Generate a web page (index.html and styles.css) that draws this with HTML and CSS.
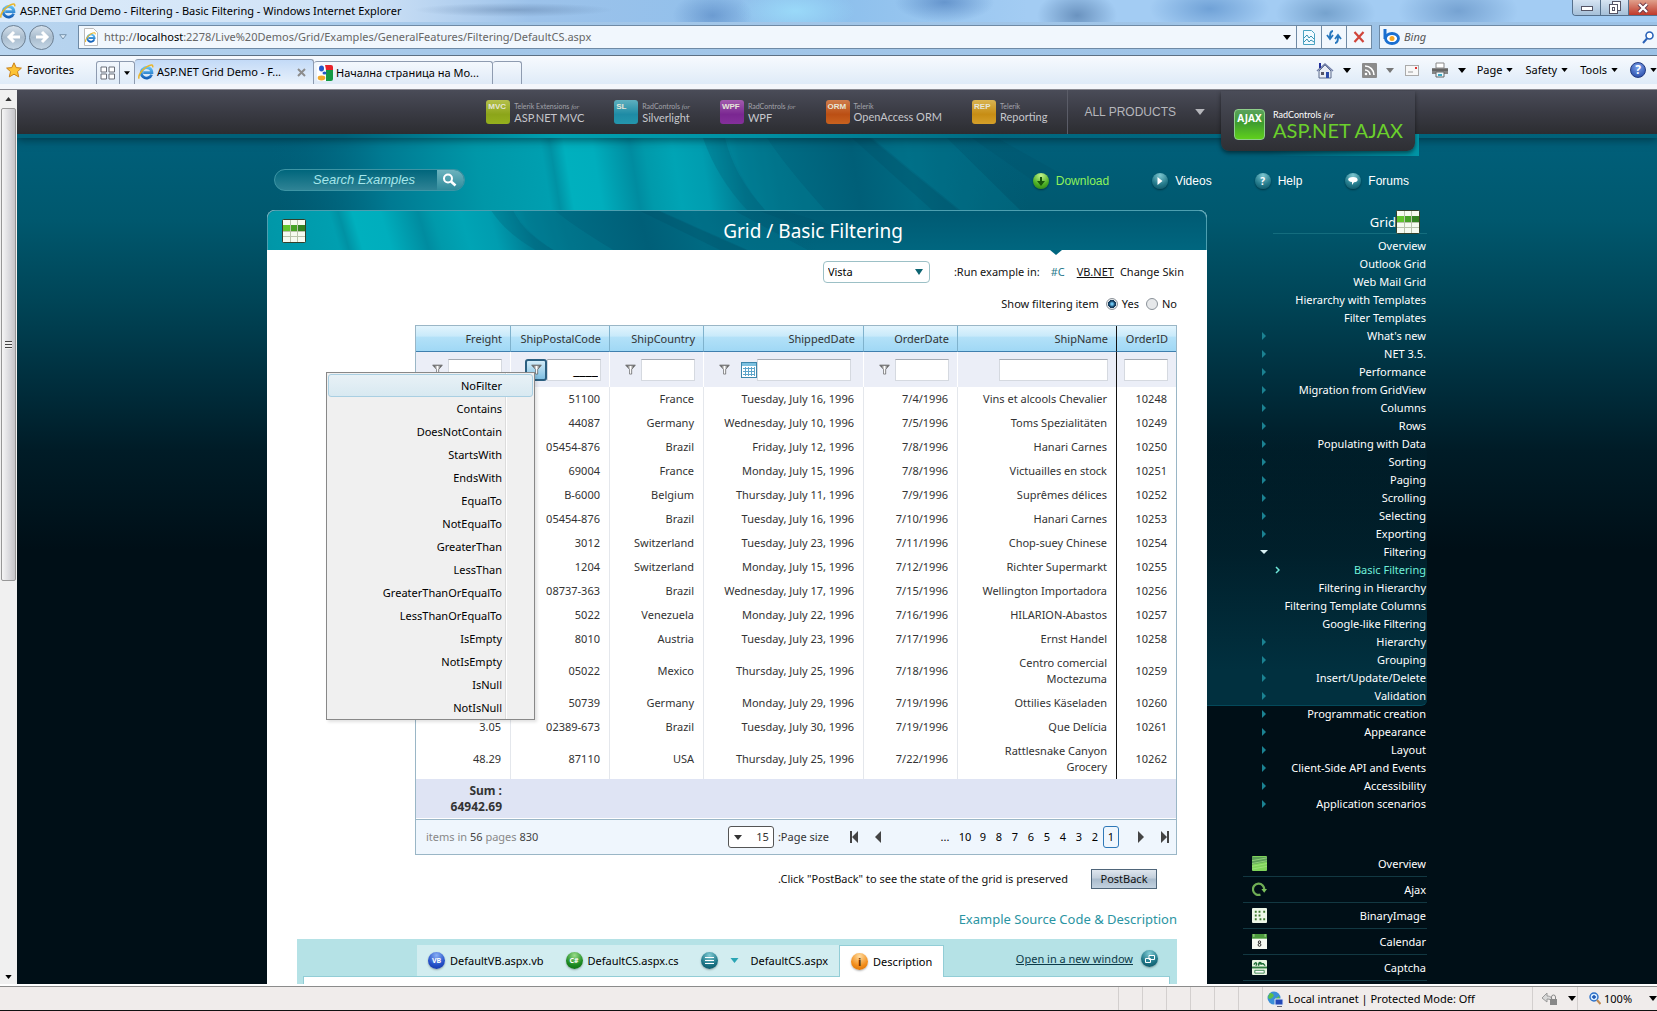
FILE: index.html
```html
<!DOCTYPE html>
<html lang="en">
<head>
	<title>ASP.NET Grid Demo - Filtering - Basic Filtering</title>
	<meta charset="utf-8">
	<link rel="stylesheet" href="styles.css">
</head>
<body>
<!-- shared icons -->
<svg class="defs" width="0" height="0" aria-hidden="true">
	<defs>
		<linearGradient id="blue" x1="0" y1="0" x2="0" y2="1"><stop offset="0" stop-color="#5fc0f5"/><stop offset="1" stop-color="#1560b8"/></linearGradient>
		<linearGradient id="metal" x1="0" y1="0" x2="1" y2="0"><stop offset="0" stop-color="#222"/><stop offset=".5" stop-color="#fff"/><stop offset="1" stop-color="#222"/></linearGradient>
		<linearGradient id="sea" gradientUnits="userSpaceOnUse" x1="0" y1="0" x2="940" y2="0" gradientTransform="skewX(9)">
			<stop offset="0" stop-color="#00607a" stop-opacity="0"/>
			<stop offset=".12" stop-color="#007a92"/>
			<stop offset=".22" stop-color="#0097a8"/>
			<stop offset=".29" stop-color="#009fb0"/>
			<stop offset=".3" stop-color="#0092a4"/>
			<stop offset=".315" stop-color="#00b0be"/>
			<stop offset=".345" stop-color="#00aebd"/>
			<stop offset=".385" stop-color="#008ca0"/>
			<stop offset=".4" stop-color="#009aab"/>
			<stop offset=".43" stop-color="#00a4b5"/>
			<stop offset=".46" stop-color="#009db0"/>
			<stop offset=".5" stop-color="#00788f"/>
			<stop offset=".54" stop-color="#006c84"/>
			<stop offset=".62" stop-color="#005f78"/>
			<stop offset=".68" stop-color="#006a82"/>
			<stop offset=".8" stop-color="#006078" stop-opacity="0"/>
		</linearGradient>
	</defs>
	<g id="waves">
		<path d="M0 0h940v72H0z" fill="url(#sea)"/>
		<path d="M436 0q14 40 44 72h18Q468 40 458 0z" fill="#005870" opacity=".25"/>
		<path d="M460 0q10 40 38 72h60Q520 30 500 0z" fill="#008ca0" opacity=".25"/>
		<path d="M585 0l80 72h26L603 0z" fill="#004f68" opacity=".3"/>
		<path d="M605 0l88 72h60L680 0z" fill="#00829a" opacity=".25"/>
		<path d="M705 0l60 42h40L730 0z" fill="#004f68" opacity=".25"/>
	</g>
	<symbol id="ie" viewBox="0 0 16 16">
		<path d="M13.6 10.6A5.3 5.3 0 1 1 13.9 8.6H5.2" fill="none" stroke="url(#blue)" stroke-width="2.8"/>
		<path d="M1.2 14.6C-.6 12 4 5.600 9 2.600c4-2.300 6.500-2.200 5.600.8" fill="none" stroke="#e9b62c" stroke-width="1.500"/>
	</symbol>
	<symbol id="funnel" viewBox="0 0 12 12">
		<path d="M1 1.500h10L7.300 6v5H5V6z" fill="url(#metal)" stroke="#444" stroke-width=".6"/>
		<path d="M.5 1.300h11" stroke="#777"/>
	</symbol>
	<symbol id="gridicon" viewBox="0 0 24 24">
		<rect x=".5" y=".5" width="23" height="23" rx="1" fill="#b9c3ac" stroke="#33402a"/>
		<path d="M1 1h7v5H1zM9 1h6v5H9zM16 1h7v5h-7zM1 13h7v4H1zM9 13h6v4H9zM16 13h7v4h-7zM1 18h7v5H1zM9 18h6v5H9zM16 18h7v5h-7z" fill="#f6faf0"/>
		<path d="M1 6h7v6H1z" fill="#62c52c"/><path d="M9 6h6v6H9z" fill="#45a125"/><path d="M16 6h7v6h-7z" fill="#358323"/>
	</symbol>
	<symbol id="down" viewBox="0 0 8 5"><path d="M0 0h8L4 5z" fill="currentColor"/></symbol>
</svg>

<div class="titlebar">
	<svg class="i16"><use href="#ie"/></svg>
	<span class="title">ASP.NET Grid Demo - Filtering - Basic Filtering - Windows Internet Explorer</span>
	<div class="win">
		<button aria-label="Minimize"><svg width="14" height="14" viewBox="0 0 14 14"><rect x="1.500" y="5.500" width="11" height="4" fill="#fff" stroke="#556"/></svg></button>
		<button aria-label="Restore"><svg width="14" height="14" viewBox="0 0 14 14"><rect x="4.500" y=".5" width="8" height="9" fill="#fff" stroke="#556"/><rect x="1.500" y="3.500" width="8" height="9" fill="#fff" stroke="#556"/><rect x="4.500" y="6.500" width="2" height="3" fill="none" stroke="#556"/></svg></button>
		<button class="close" aria-label="Close"><svg width="14" height="14" viewBox="0 0 14 14"><path d="M3 3l8 8M11 3l-8 8" stroke="#634" stroke-width="4"/><path d="M3 3l8 8M11 3l-8 8" stroke="#fff" stroke-width="2.400"/></svg></button>
	</div>
</div>

<div class="addressbar">
	<button class="travel" aria-label="Back"><svg width="16" height="16" viewBox="0 0 16 16"><path d="M14 8H4M8 3L3 8l5 5" fill="none" stroke="#fff" stroke-width="3"/></svg></button>
	<button class="travel" aria-label="Forward"><svg width="16" height="16" viewBox="0 0 16 16"><path d="M2 8h10M8 3l5 5-5 5" fill="none" stroke="#fff" stroke-width="3"/></svg></button>
	<svg class="recent" width="8" height="6" viewBox="0 0 8 6"><path d="M.7.7h6.600L4 5z" fill="#dcebf8" stroke="#7793ac"/></svg>
	<div class="url">
		<svg class="page-ico" width="16" height="18" viewBox="0 0 16 18"><path d="M1.500.5h9l4 4v13h-13z" fill="#fff" stroke="#bbb"/><svg x="2" y="4" width="11" height="11"><use href="#ie"/></svg></svg>
		<span class="addr">http://<b>localhost</b>:2278/Live%20Demos/Grid/Examples/GeneralFeatures/Filtering/DefaultCS.aspx</span>
		<svg class="arrow" width="8" height="5"><use href="#down"/></svg>
		<button aria-label="Compatibility view"><svg width="12" height="15" viewBox="0 0 12 15"><path d="M.5.5h8l3 3v11H.5z" fill="#f2fbff" stroke="#4aa3c2"/><path d="M1 8l3-3 2 3 2-2 3 3M1 12l3-3 2 3 2-2 3 2" fill="none" stroke="#3a92b4"/></svg></button>
		<button aria-label="Refresh"><svg width="16" height="14" viewBox="0 0 16 14"><path d="M7 1C4 1 4 4 4 8M1 5l3 4 3-4M9 13c3 0 3-3 3-7M9 9l3-4 3 4" fill="none" stroke="#2676bd" stroke-width="1.800"/></svg></button>
		<button aria-label="Stop"><svg width="12" height="12" viewBox="0 0 12 12"><path d="M1.500 1l9 10M10.500 1l-9 10" stroke="#d0453b" stroke-width="2.200"/></svg></button>
	</div>
	<div class="bing">
		<svg width="17" height="16" viewBox="0 0 17 16"><path d="M2 0v10" stroke="#1a6fd0" stroke-width="3"/><ellipse cx="9" cy="9.500" rx="6.500" ry="5" fill="#fff" stroke="#1a6fd0" stroke-width="2.800"/><circle cx="9" cy="9.500" r="2.500" fill="#f5a623"/></svg>
		<input type="text" placeholder="Bing" aria-label="Search Bing">
		<svg width="12" height="13" viewBox="0 0 12 13"><circle cx="7.500" cy="4.500" r="3.500" fill="#fff" stroke="#2a62b8" stroke-width="1.600"/><path d="M5 7.500L1 12" stroke="#2a62b8" stroke-width="2"/></svg>
	</div>
</div>

<div class="commandbar">
	<div class="fav">
		<svg width="16" height="16" viewBox="0 0 16 16"><path d="M8 .8l2.200 4.800 5.200.5-3.900 3.500 1.200 5.300L8 12.200l-4.700 2.700 1.200-5.300L.6 6.100l5.200-.5z" fill="#fdc436" stroke="#c9801a"/></svg>
		Favorites
	</div>
	<div class="tabs">
		<div class="quick">
			<button aria-label="Quick tabs"><svg width="16" height="14" viewBox="0 0 16 14"><path d="M1 1h5.500v5H1zM9 1h5.500v5H9zM1 8h5.500v5H1zM9 8h5.500v5H9z" fill="#fff" stroke="#6b6f78"/></svg></button>
			<button aria-label="Tab list"><svg width="6" height="4"><use href="#down"/></svg></button>
		</div>
		<div class="tab active"><svg class="i16"><use href="#ie"/></svg><span>ASP.NET Grid Demo - F...</span><svg class="x" width="9" height="9" viewBox="0 0 9 9"><path d="M1 1l7 7M8 1L1 8" stroke="#8c8c8c" stroke-width="2"/></svg></div>
		<div class="tab">
			<svg class="i16" viewBox="0 0 16 16"><path d="M8 0h6a2 2 0 0 1 2 2v3H9z" fill="#e8232a"/><path d="M9 5h7v9a2 2 0 0 1-2 2H9z" fill="#149a44"/><path d="M0 2a2 2 0 0 1 2-2h6l1 16H2a2 2 0 0 1-2-2z" fill="#fff"/><ellipse cx="4.500" cy="3.500" rx="2.500" ry="3" fill="#2458c8"/><ellipse cx="7.500" cy="8" rx="2" ry="1.500" fill="#2458c8"/><ellipse cx="4.500" cy="13" rx="3.800" ry="2.400" fill="#f0a92e"/></svg>
			<span>Начална страница на Mo...</span>
		</div>
		<div class="tab new"></div>
	</div>
	<div class="commands">
		<svg width="18" height="17" viewBox="0 0 18 17"><path d="M3 9v7h12V9L9 3z" fill="#e8ecf4" stroke="#5a6a8c"/><path d="M1 9l8-7 8 7" fill="none" stroke="#7380a8" stroke-width="1.600"/><path d="M4 1v5" stroke="#22309b" stroke-width="2"/><path d="M5 10h3v3H5z" fill="#556"/><path d="M10 10h3v6h-3z" fill="#2a4aa8"/></svg>
		<svg class="arrow" width="8" height="5"><use href="#down"/></svg>
		<svg width="15" height="15" viewBox="0 0 15 15"><rect width="15" height="15" rx="1" fill="#8b8b8b"/><path d="M3 7a5 5 0 0 1 5 5M3 3a9 9 0 0 1 9 9" fill="none" stroke="#fff" stroke-width="1.600"/><circle cx="4" cy="11" r="1.300" fill="#fff"/></svg>
		<svg class="arrow dim" width="8" height="5"><use href="#down"/></svg>
		<svg width="14" height="11" viewBox="0 0 14 11"><rect x=".5" y=".5" width="13" height="10" fill="#f7f7f7" stroke="#aaa"/><path d="M10 2h2v2h-2z" fill="#d33"/><path d="M3 7h5" stroke="#999"/></svg>
		<svg width="18" height="16" viewBox="0 0 18 16"><path d="M5 1h8v5H5z" fill="#fff" stroke="#888"/><path d="M1 6h16v6H1z" fill="#858585"/><path d="M1 8h16" stroke="#444"/><path d="M5 10h8v5H5z" fill="#eef8fc" stroke="#666"/><path d="M7 12h4v2H7z" fill="#3aa8c4"/></svg>
		<svg class="arrow" width="8" height="5"><use href="#down"/></svg>
		<button>Page <svg width="7" height="4"><use href="#down"/></svg></button>
		<button>Safety <svg width="7" height="4"><use href="#down"/></svg></button>
		<button>Tools <svg width="7" height="4"><use href="#down"/></svg></button>
		<button class="help" aria-label="Help"><i>?</i><svg width="7" height="4"><use href="#down"/></svg></button>
	</div>
</div>

<div class="viewport">
	<div class="scrollbar">
		<svg width="7" height="4" viewBox="0 0 8 5"><path d="M0 5h8L4 0z" fill="#333"/></svg>
		<div class="track"><div class="thumb"><i></i></div></div>
		<svg width="7" height="4"><use href="#down"/></svg>
	</div>

	<div class="page">
		<div class="topbar">
			<div class="wrap products">
				<a href="#" class="prod"><i class="mvc">MVC</i><span><small>Telerik Extensions <em>for</em></small>ASP.NET MVC</span></a>
				<a href="#" class="prod"><i class="sl">SL</i><span><small>RadControls <em>for</em></small>Silverlight</span></a>
				<a href="#" class="prod"><i class="wpf">WPF</i><span><small>RadControls <em>for</em></small>WPF</span></a>
				<a href="#" class="prod"><i class="orm">ORM</i><span><small>Telerik</small>OpenAccess ORM</span></a>
				<a href="#" class="prod"><i class="rep">REP</i><span><small>Telerik</small>Reporting</span></a>
				<a href="#" class="all">ALL PRODUCTS <svg width="10" height="6"><use href="#down"/></svg></a>
				<div class="ajax-glow"></div>
				<a href="#" class="ajax"><i>AJAX</i><span><small>RadControls <em>for</em></small>ASP.NET AJAX</span></a>
			</div>
		</div>

		<div class="wrap tools">
			<svg class="sea" viewBox="0 0 940 72" preserveAspectRatio="none"><use href="#waves"/></svg>
			<form class="search">
				<input type="text" placeholder="Search Examples" aria-label="Search Examples">
				<button type="button" aria-label="Search"><svg width="15" height="14" viewBox="0 0 15 14"><circle cx="6" cy="5.500" r="4" fill="none" stroke="#fff" stroke-width="2"/><path d="M9 8.500l4.500 4" stroke="#fff" stroke-width="2.600"/></svg></button>
			</form>
			<div class="links">
				<a href="#" class="dl"><i class="orb green"><svg width="8" height="9" viewBox="0 0 8 9"><path d="M3 0h2v4h3L4 9 0 4h3z" fill="#17560c"/></svg></i>Download</a>
				<a href="#"><i class="orb"><svg width="6" height="8" viewBox="0 0 5 8"><path d="M0 0l5 4-5 4z" fill="#fff"/></svg></i>Videos</a>
				<a href="#"><i class="orb">?</i>Help</a>
				<a href="#"><i class="orb"><svg width="10" height="8" viewBox="0 0 10 8"><path d="M5 0c6 0 6 5 1 5.200L4 8V5C-1.500 4.500-1 0 5 0z" fill="#fff"/></svg></i>Forums</a>
			</div>
		</div>

		<div class="wrap columns">
			<div class="card">
				<div class="card-head">
					<svg class="sea" viewBox="212 0 940 72" preserveAspectRatio="none"><use href="#waves"/></svg>
					<svg class="i24"><use href="#gridicon"/></svg>
					<h1>Grid / Basic Filtering</h1>
				</div>

				<div class="config">
					<select aria-label="Skin"><option>Vista</option></select>
					<span class="run">:Run example in:</span>
					<a href="#" class="cs">#C</a>
					<a href="#" class="vb">VB.NET</a>
					<span class="skin">Change Skin</span>
				</div>
				<div class="toggle">
					<span>Show filtering item</span>
					<label><input type="radio" name="show" checked>Yes</label>
					<label><input type="radio" name="show">No</label>
				</div>

				<div class="grid">
					<table>
						<colgroup><col class="w95"><col class="w99"><col class="w94"><col class="w160"><col class="w94"><col class="w159"><col class="w59"></colgroup>
						<thead>
							<tr><th>Freight</th><th>ShipPostalCode</th><th>ShipCountry</th><th>ShippedDate</th><th>OrderDate</th><th>ShipName</th><th>OrderID</th></tr>
							<tr class="filter">
								<td><div><button aria-label="Filter Freight"><svg><use href="#funnel"/></svg></button><input type="text" aria-label="Freight"></div></td>
								<td><div><button class="on" aria-label="Filter ShipPostalCode"><svg><use href="#funnel"/></svg></button><input type="text" aria-label="ShipPostalCode" value="____"></div></td>
								<td><div><button aria-label="Filter ShipCountry"><svg><use href="#funnel"/></svg></button><input type="text" aria-label="ShipCountry"></div></td>
								<td><div class="date"><button aria-label="Filter ShippedDate"><svg><use href="#funnel"/></svg></button><button class="cal" aria-label="Open calendar"><svg viewBox="0 0 16 16"><rect x=".5" y=".5" width="15" height="15" fill="#fff" stroke="#3d86ab"/><path d="M1 1h14v3H1z" fill="#7cc0e0"/><path d="M2 6.500h12M2 9.500h12M2 12.500h12M4.500 5v9M7.500 5v9M10.500 5v9M13.500 5v9" stroke="#5ea5cb"/></svg></button><input type="text" aria-label="ShippedDate"></div></td>
								<td><div><button aria-label="Filter OrderDate"><svg><use href="#funnel"/></svg></button><input type="text" aria-label="OrderDate"></div></td>
								<td><div class="name"><input type="text" aria-label="ShipName"></div></td>
								<td><div class="id"><input type="text" aria-label="OrderID"></div></td>
							</tr>
						</thead>
						<tbody>
							<tr><td></td><td>51100</td><td>France</td><td>Tuesday, July 16, 1996</td><td>7/4/1996</td><td>Vins et alcools Chevalier</td><td>10248</td></tr>
							<tr><td></td><td>44087</td><td>Germany</td><td>Wednesday, July 10, 1996</td><td>7/5/1996</td><td>Toms Spezialitäten</td><td>10249</td></tr>
							<tr><td></td><td>05454-876</td><td>Brazil</td><td>Friday, July 12, 1996</td><td>7/8/1996</td><td>Hanari Carnes</td><td>10250</td></tr>
							<tr><td></td><td>69004</td><td>France</td><td>Monday, July 15, 1996</td><td>7/8/1996</td><td>Victuailles en stock</td><td>10251</td></tr>
							<tr><td></td><td>B-6000</td><td>Belgium</td><td>Thursday, July 11, 1996</td><td>7/9/1996</td><td>Suprêmes délices</td><td>10252</td></tr>
							<tr><td></td><td>05454-876</td><td>Brazil</td><td>Tuesday, July 16, 1996</td><td>7/10/1996</td><td>Hanari Carnes</td><td>10253</td></tr>
							<tr><td></td><td>3012</td><td>Switzerland</td><td>Tuesday, July 23, 1996</td><td>7/11/1996</td><td>Chop-suey Chinese</td><td>10254</td></tr>
							<tr><td></td><td>1204</td><td>Switzerland</td><td>Monday, July 15, 1996</td><td>7/12/1996</td><td>Richter Supermarkt</td><td>10255</td></tr>
							<tr><td></td><td>08737-363</td><td>Brazil</td><td>Wednesday, July 17, 1996</td><td>7/15/1996</td><td>Wellington Importadora</td><td>10256</td></tr>
							<tr><td></td><td>5022</td><td>Venezuela</td><td>Monday, July 22, 1996</td><td>7/16/1996</td><td>HILARION-Abastos</td><td>10257</td></tr>
							<tr><td></td><td>8010</td><td>Austria</td><td>Tuesday, July 23, 1996</td><td>7/17/1996</td><td>Ernst Handel</td><td>10258</td></tr>
							<tr><td></td><td>05022</td><td>Mexico</td><td>Thursday, July 25, 1996</td><td>7/18/1996</td><td>Centro comercial<br>Moctezuma</td><td>10259</td></tr>
							<tr><td></td><td>50739</td><td>Germany</td><td>Monday, July 29, 1996</td><td>7/19/1996</td><td>Ottilies Käseladen</td><td>10260</td></tr>
							<tr><td>3.05</td><td>02389-673</td><td>Brazil</td><td>Tuesday, July 30, 1996</td><td>7/19/1996</td><td>Que Delícia</td><td>10261</td></tr>
							<tr><td>48.29</td><td>87110</td><td>USA</td><td>Thursday, July 25, 1996</td><td>7/22/1996</td><td>Rattlesnake Canyon<br>Grocery</td><td>10262</td></tr>
						</tbody>
						<tfoot>
							<tr><td>Sum :<br>64942.69</td><td></td><td></td><td></td><td></td><td></td><td></td></tr>
						</tfoot>
					</table>
					<div class="pager">
						<span class="info">items in <b>56</b> pages <b>830</b></span>
						<div class="size">
							<button><svg width="8" height="5"><use href="#down"/></svg>15</button>
							<span>:Page size</span>
						</div>
						<button class="nav" aria-label="First page"><svg width="10" height="12" viewBox="0 0 10 12"><path d="M1 0h2v12H1zM9 0v12L3 6z" fill="#444"/></svg></button>
						<button class="nav" aria-label="Previous page"><svg width="6" height="12" viewBox="0 0 6 12"><path d="M6 0v12L0 6z" fill="#444"/></svg></button>
						<div class="pages">
							<a href="#">...</a><a href="#">10</a><a href="#">9</a><a href="#">8</a><a href="#">7</a><a href="#">6</a><a href="#">5</a><a href="#">4</a><a href="#">3</a><a href="#">2</a><a href="#" class="cur">1</a>
						</div>
						<button class="nav" aria-label="Next page"><svg width="6" height="12" viewBox="0 0 6 12"><path d="M0 0v12l6-6z" fill="#444"/></svg></button>
						<button class="nav" aria-label="Last page"><svg width="10" height="12" viewBox="0 0 10 12"><path d="M7 0h2v12H7zM1 0v12l6-6z" fill="#444"/></svg></button>
					</div>

					<ul class="menu">
						<li class="hover">NoFilter</li>
						<li>Contains</li>
						<li>DoesNotContain</li>
						<li>StartsWith</li>
						<li>EndsWith</li>
						<li>EqualTo</li>
						<li>NotEqualTo</li>
						<li>GreaterThan</li>
						<li>LessThan</li>
						<li>GreaterThanOrEqualTo</li>
						<li>LessThanOrEqualTo</li>
						<li>IsEmpty</li>
						<li>NotIsEmpty</li>
						<li>IsNull</li>
						<li>NotIsNull</li>
					</ul>
				</div>

				<div class="post">
					<span>.Click "PostBack" to see the state of the grid is preserved</span>
					<button>PostBack</button>
				</div>
				<h2>Example Source Code &amp; Description</h2>

				<div class="source">
					<div class="source-bar">
						<div class="files">
							<a href="#"><i class="ball vbi">VB</i>DefaultVB.aspx.vb</a>
							<a href="#"><i class="ball csi">C#</i>DefaultCS.aspx.cs</a>
							<a href="#" class="drop"><i class="ball lsi"><svg width="9" height="7" viewBox="0 0 9 7"><path d="M0 .5h9M0 3.500h9M0 6.500h9" stroke="#fff"/></svg></i><svg class="tri" width="9" height="5"><use href="#down"/></svg>DefaultCS.aspx</a>
							<a href="#" class="sel"><i class="ball ini">i</i>Description</a>
						</div>
						<a href="#" class="open"><u>Open in a new window</u><i class="ball lsi"><svg width="10" height="8" viewBox="0 0 10 8"><path d="M4 .5h5.500v4H4zM.5 3.500h5v4h-5z" fill="#2d8697" stroke="#fff"/></svg></i></a>
					</div>
					<div class="source-body"></div>
				</div>
			</div>

			<div class="side">
				<div class="side-head"><span>Grid</span><svg class="i24"><use href="#gridicon"/></svg></div>
				<ul class="tree">
					<li><a href="#">Overview</a></li>
					<li><a href="#">Outlook Grid</a></li>
					<li><a href="#">Web Mail Grid</a></li>
					<li><a href="#">Hierarchy with Templates</a></li>
					<li><a href="#">Filter Templates</a></li>
					<li class="sub"><a href="#">What's new</a></li>
					<li class="sub"><a href="#">NET 3.5.</a></li>
					<li class="sub"><a href="#">Performance</a></li>
					<li class="sub"><a href="#">Migration from GridView</a></li>
					<li class="sub"><a href="#">Columns</a></li>
					<li class="sub"><a href="#">Rows</a></li>
					<li class="sub"><a href="#">Populating with Data</a></li>
					<li class="sub"><a href="#">Sorting</a></li>
					<li class="sub"><a href="#">Paging</a></li>
					<li class="sub"><a href="#">Scrolling</a></li>
					<li class="sub"><a href="#">Selecting</a></li>
					<li class="sub"><a href="#">Exporting</a></li>
					<li class="sub opened"><a href="#">Filtering</a></li>
					<li class="here"><svg width="5" height="8" viewBox="0 0 5 8"><path d="M1 1l3 3-3 3" fill="none" stroke="#6fe6d8" stroke-width="1.500"/></svg><a href="#">Basic Filtering</a></li>
					<li><a href="#">Filtering in Hierarchy</a></li>
					<li><a href="#">Filtering Template Columns</a></li>
					<li><a href="#">Google-like Filtering</a></li>
					<li class="sub"><a href="#">Hierarchy</a></li>
					<li class="sub"><a href="#">Grouping</a></li>
					<li class="sub"><a href="#">Insert/Update/Delete</a></li>
					<li class="sub"><a href="#">Validation</a></li>
					<li class="sub"><a href="#">Programmatic creation</a></li>
					<li class="sub"><a href="#">Appearance</a></li>
					<li class="sub"><a href="#">Layout</a></li>
					<li class="sub"><a href="#">Client-Side API and Events</a></li>
					<li class="sub"><a href="#">Accessibility</a></li>
					<li class="sub"><a href="#">Application scenarios</a></li>
				</ul>
				<ul class="controls">
					<li><svg viewBox="0 0 16 16"><rect width="16" height="16" rx="1" fill="#7fd45a"/><path d="M0 1h16v5L0 9z" fill="#5c9f57"/><path d="M0 5l16-3M0 8l16-3M0 11l16-3M0 14l16-3" stroke="#a9e88a" stroke-width=".7"/></svg><a href="#">Overview</a></li>
					<li><svg viewBox="0 0 16 16"><path d="M9 13.500A6 6 0 1 1 13 8.500" fill="none" stroke="#6fae55" stroke-width="2.400"/><path d="M10 7.500h6l-3 4z" fill="#7cc25c"/></svg><a href="#">Ajax</a></li>
					<li><svg viewBox="0 0 16 16"><rect width="16" height="16" rx="1" fill="#eef7e8"/><path d="M3 3h2v2H3zM7 3h2v2H7zM12 3h2v2h-2zM3 7h2v2H3zM7 7h2v2H7zM3 11h2v2H3zM8 11h2v2H8zM12 11h2v2h-2z" fill="#3d7a2e"/></svg><a href="#">BinaryImage</a></li>
					<li><svg viewBox="0 0 16 16"><path d="M0 1h16v15H0z" fill="#f6faf3"/><path d="M0 0h16v5H0z" fill="#4c9a3c"/><path d="M2 0v3M14 0v3" stroke="#b8e0a8"/><circle cx="8" cy="8.600" r="1.300" fill="none" stroke="#222"/><circle cx="8" cy="11.600" r="1.500" fill="none" stroke="#222"/></svg><a href="#">Calendar</a></li>
					<li><svg viewBox="0 0 16 16"><rect width="16" height="16" rx="1" fill="#e9f5e2"/><path d="M2 5c2-4 4-1 2 1M7 6c0-5 3-4 3-1M8 4h4l2 2" fill="none" stroke="#1e6b35" stroke-width="1.500"/><path d="M0 7h16v2H0z" fill="#2e7a3d"/><path d="M3 11h10v3H3z" fill="#fff" stroke="#3c8550"/></svg><a href="#">Captcha</a></li>
				</ul>
			</div>
		</div>
	</div>
</div>

<div class="status">
	<i></i><i></i><i></i><i></i><i></i><i></i>
	<div class="zone"><svg width="17" height="16" viewBox="0 0 17 16"><circle cx="7" cy="7" r="6.500" fill="#3a8fd8"/><path d="M3 2c3 0 5 2 3 4S2 9 1 6zM8 8l4-3 1 4-3 3z" fill="#5cbf4a"/><path d="M8 8h8v6H8z" fill="#2348b8" stroke="#dfe6f5"/><path d="M10 15.500h5" stroke="#667"/></svg>Local intranet | Protected Mode: Off</div>
	<div class="lock"><svg width="17" height="14" viewBox="0 0 17 14"><path d="M6 1L1 6l5 4V7c3 0 4 1 5 2 0-3-1-5-5-5z" fill="#d8d8d8" stroke="#999"/><path d="M9 7h7v6H9z" fill="#888"/><path d="M10.500 7V5a2 2 0 0 1 4 0v2" fill="none" stroke="#888"/></svg><svg width="8" height="5"><use href="#down"/></svg></div>
	<div class="zoom"><svg width="12" height="13" viewBox="0 0 12 13"><circle cx="5" cy="5" r="4" fill="#d5ebff" stroke="#2a6fc8" stroke-width="1.400"/><path d="M3 5h4M5 3v4" stroke="#1550b0" stroke-width="1.400"/><path d="M8 8l3.500 4" stroke="#c08a50" stroke-width="2"/></svg><span>100%</span><svg width="8" height="5"><use href="#down"/></svg></div>
</div>
</body>
</html>
```
FILE: styles.css
```css
*{box-sizing:border-box;}
body,h1,h2,ul,li{margin:0;padding:0;}
ul{list-style:none;}
html,body{height:100%;}
body{
	display:flex;
	flex-direction:column;
	overflow:hidden;
	background:#f0eceb;
	color:#000;
	font:11px/16px "Noto Sans","Open Sans",sans-serif;
}
button{
	padding:0;
	border:0;
	background:none;
	color:inherit;
	font:inherit;
}
input{font:inherit;min-width:0;}
a{color:inherit;text-decoration:none;}
svg{flex:none;display:block;}
.defs{position:absolute;}
.i16{width:16px;height:16px;}
.i24{width:24px;height:24px;}

/* window frame */
.titlebar,.addressbar{
	display:flex;
	align-items:center;
	flex:none;
}
.titlebar{
	height:22px;
	gap:4px;
	background:
		radial-gradient(ellipse 100px 7px at 31% 45%,rgba(70,100,140,.35),transparent),
		radial-gradient(ellipse 40px 24px at 43% 70%,rgba(50,100,170,.4),transparent),
		radial-gradient(ellipse 60px 24px at 48% 50%,rgba(155,220,250,.9),transparent),
		radial-gradient(ellipse 50px 20px at 57% 10%,rgba(50,100,170,.5),transparent),
		radial-gradient(ellipse 40px 26px at 65% 70%,rgba(50,90,140,.5),transparent),
		radial-gradient(ellipse 60px 26px at 73% 40%,rgba(50,110,180,.45),transparent),
		radial-gradient(ellipse 50px 26px at 80% 60%,rgba(50,100,150,.4),transparent),
		radial-gradient(ellipse 60px 30px at 88% 50%,rgba(50,100,160,.4),transparent),
		linear-gradient(90deg,#dcebfa,#cfe2f6 22%,#9cc2ea 32%,#8cbfec 50%,#a3ccf3 62%,#a3ccf3);
}
.title{flex:1;}
.win{
	display:flex;
	align-self:flex-start;
	height:16px;
	border:1px solid #55708c;
	border-top:0;
	border-right:0;
	border-radius:0 0 0 4px;
	overflow:hidden;
}
.win button{
	display:flex;
	align-items:center;
	justify-content:center;
	width:28px;
	background:linear-gradient(#d6e4f2,#a5bfd8);
	border-right:1px solid #55708c;
}
.win .close{background:linear-gradient(#e0a08c,#c0392a);border:0;}
.addressbar{
	height:34px;
	padding-top:1px;
	padding-left:1px;
	padding-bottom:4px;
	border-bottom:1px solid #5d7083;
	background:linear-gradient(90deg,#b9d5ef,#a3c7e9 30%,#9cc2e6);
}
.travel{
	width:25px;
	height:25px;
	margin-right:3px;
	display:flex;
	align-items:center;
	justify-content:center;
	border:1px solid #6c7f92;
	border-radius:50%;
	background:linear-gradient(#d5e1ec,#a9bccd 50%,#c4d6e6);
}
.recent{margin:0 11px 0 2px;}
.url,.bing{
	display:flex;
	align-items:center;
	height:24px;
	border:1px solid #6f8aa5;
	background:#f1f7fd;
}
.url{flex:1;padding-left:4px;}
.addr{
	flex:1;
	margin-left:5px;
	color:#666;
}
.addr b{color:#000;font-weight:normal;}
.url .arrow{margin-right:5px;}
.url button{
	display:flex;
	align-items:center;
	justify-content:center;
	width:25px;
	height:22px;
	border-left:1px solid #6f8aa5;
}
.bing{
	width:278px;
	margin-left:7px;
	padding:0 3px;
	border-right:0;
}
.bing input{
	flex:1;
	border:0;
	padding:0 4px;
	background:none;
	font-style:italic;
}
.bing input::placeholder{color:#555;opacity:1;}

.commandbar{
	display:flex;
	flex:none;
	height:34px;
	padding-bottom:5px;
	background:linear-gradient(#f7fafe,#dfebf8 28px,#f4f6fb 28px);
	border-bottom:1px solid #8a8a92;
}
.fav{
	display:flex;
	align-items:center;
	gap:5px;
	width:96px;
	padding-left:6px;
}
.tabs{display:flex;align-items:flex-end;}
.quick{display:flex;height:23px;border:1px solid #8e9bb0;border-bottom:0;border-radius:3px 3px 0 0;}
.quick button{display:flex;align-items:center;justify-content:center;width:22px;}
.quick button + button{width:15px;border-left:1px solid #8e9bb0;}
.tab{
	display:flex;
	align-items:center;
	height:23px;
	width:179px;
	padding-left:3px;
	gap:3px;
	border:1px solid #8e9bb0;
	border-bottom:0;
	border-left-width:0;
	border-radius:3px 3px 0 0;
	background:linear-gradient(#f4f8fd,#dfeaf7);
	white-space:nowrap;
}
.tab.active{height:25px;background:linear-gradient(#c3daf7,#e8f1fb);}
.tab .x{margin:0 7px 0 auto;}
.tab.new{width:29px;}
.commands{
	display:flex;
	align-items:center;
	margin-left:auto;
}
.commands .arrow{margin:0 11px 0 9px;}
.commands .dim{color:#777;}
.commands .dim + svg{margin-right:12px;}
.commands button{display:flex;align-items:center;gap:4px;margin-right:12px;}
.commands .help{margin-right:0;}
.help i{
	width:16px;
	height:16px;
	border:1px solid #223a80;
	border-radius:50%;
	background:radial-gradient(circle at 50% 30%,#7fa5ee,#1d3f9e);
	color:#fff;
	font:bold 12px/14px "Noto Sans",sans-serif;
	text-align:center;
}

/* scrolling area */
.viewport{
	display:flex;
	flex:1;
	min-height:0;
}
.scrollbar{
	display:flex;
	flex-direction:column;
	align-items:center;
	gap:7px;
	width:17px;
	padding:7px 1px;
	background:#f0f0f0;
}
.track{flex:1;width:100%;}
.thumb{
	display:flex;
	align-items:center;
	justify-content:center;
	height:55%;
	border:1px solid #979797;
	border-radius:2px;
	background:linear-gradient(90deg,#f5f5f5,#d8d8dc 60%,#c4c4c8);
}
.thumb i{
	width:7px;
	height:8px;
	background:repeating-linear-gradient(#444 0 1px,#eee 1px 3px);
}
.page{
	flex:1;
	overflow:hidden;
	background:#000f17 linear-gradient(#00607b 44px,#00586e 130px,#004557 210px,#002f3e 290px,#001c27 360px,#000f17 460px) no-repeat;
	color:#fff;
}
.wrap{
	max-width:1180px;
	margin:0 auto;
	padding-left:20px;
	position:relative;
}
.topbar{
	position:relative;
	z-index:1;
	height:48px;
	border-width:0 0 4px;
	border-style:solid;
	border-image:linear-gradient(90deg,#006078 20%,#00a0b0 33%,#0090a3 45%,#006880 60%,#006078) 4;
	background:linear-gradient(#4a4c58,#3a3b44 50%,#2c2d31);
	background-clip:padding-box;
	box-shadow:0 2px 8px rgba(0,30,40,.6);
}
.products{
	display:flex;
	align-items:center;
	justify-content:flex-end;
	gap:30px;
	height:44px;
	padding-right:206px;
	color:#c6c7cc;
	white-space:nowrap;
}
.prod{
	display:flex;
	align-items:center;
	gap:4px;
	font:11px/12px Lato,sans-serif;
}
.prod small{display:block;font-size:7px;line-height:10px;color:#a2a3aa;}
em{font-family:"Liberation Serif",serif;}
.prod i{
	width:24px;
	height:24px;
	padding-left:2px;
	border-radius:3px;
	color:#e6e6d8;
	font:bold 8px/13px "Liberation Sans",sans-serif;
}
.mvc{background:linear-gradient(#b5c04c,#8ca51a 60%,#95b01d);}
.sl{background:linear-gradient(#5fb0bf,#1e8ba5 60%,#2496ad);}
.wpf{background:linear-gradient(#a25cae,#7a2791 60%,#84309b);}
.orm{background:linear-gradient(#cf7c4b,#bb4f14 60%,#c9621f);}
.rep{background:linear-gradient(#dab452,#c78d14 60%,#d5a02a);}
.all{
	display:flex;
	align-items:center;
	gap:19px;
	height:44px;
	margin-left:-10px;
	padding:0 16px;
	border-left:1px solid #5b5d68;
	color:#b5b6bb;
	font:12px/16px "Liberation Sans",sans-serif;
}
.ajax,.ajax-glow{position:absolute;}
.ajax-glow{
	right:8px;
	top:44px;
	width:150px;
	height:22px;
	background:linear-gradient(90deg,transparent,#0095a6);
}
.ajax{
	right:12px;
	top:1px;
	display:flex;
	align-items:center;
	gap:8px;
	width:194px;
	height:60px;
	padding:6px 0 0 13px;
	border-radius:0 0 8px 8px;
	background:linear-gradient(#4a4c58,#2e2f34);
	box-shadow:0 2px 4px rgba(0,0,0,.5);
	color:#6bd02c;
	font:20px/18px Lato,sans-serif;
}
.ajax small{display:block;color:#fff;font-size:9px;line-height:11px;}
.ajax i{
	width:31px;
	height:31px;
	border:1px solid #8fd08a;
	border-radius:4px;
	background:linear-gradient(#5aa25c,#3f9d2f 45%,#5fd01c);
	color:#fff;
	font:bold 10px/17px "Noto Sans",sans-serif;
	text-align:center;
}

.tools{
	display:flex;
	align-items:flex-start;
	justify-content:space-between;
	height:72px;
	padding-top:31px;
	padding-right:18px;
}
/* light streaks behind the content */
.sea{
	position:absolute;
	left:0;
	top:0;
	width:100%;
	height:100%;
}
.tools .sea{left:20px;width:940px;}
.search{
	display:flex;
	position:relative;
	width:191px;
	height:22px;
	margin-left:7px;
	border:1px solid #3d95a5;
	border-radius:11px;
	background:linear-gradient(#00667c,#2f8395);
	overflow:hidden;
}
.search input{
	flex:1;
	padding:0 0 0 38px;
	border:0;
	background:none;
	color:#a5e6ea;
	font:italic 13px/20px "Liberation Sans",sans-serif;
}
.search input::placeholder{color:#a5e6ea;opacity:1;}
.search button{
	width:27px;
	padding-left:5px;
	background:linear-gradient(#6db3be,#2f8b9b);
}
.links{
	display:flex;
	position:relative;
	gap:43px;
	padding-top:4px;
	font:12px/16px "Liberation Sans",sans-serif;
}
.links a{display:flex;align-items:center;gap:7px;}
.links .dl{color:#8ef25a;}
.orb{
	display:flex;
	align-items:center;
	justify-content:center;
	width:16px;
	height:16px;
	border-radius:50%;
	background:radial-gradient(circle at 50% 15%,#7cc6d0,#23798a 60%,#0c4f60);
	box-shadow:0 1px 2px rgba(0,0,0,.4);
	font:bold 10px/16px "Noto Sans",sans-serif;
}
.orb.green{background:radial-gradient(circle at 50% 15%,#c3f58d,#4caf24 60%,#2a7a10);}

/* example card */
.columns{display:flex;align-items:flex-start;}
.card{
	flex:1;
	min-width:0;
	background:#fff;
	border-radius:8px 8px 0 0;
	color:#111;
}
.card-head{
	display:flex;
	align-items:center;
	position:relative;
	height:40px;
	padding-left:14px;
	border:1px solid #4d9fb0;
	border-bottom:0;
	border-radius:8px 8px 0 0;
	background:linear-gradient(#005a73,#00667f);
	color:#fff;
}
.card-head .sea{border-radius:7px 7px 0 0;}
.card-head .i24,.card-head h1{position:relative;}
.card-head:after{
	content:"";
	position:absolute;
	right:144px;
	top:39px;
	border:6px solid transparent;
	border-top:5px solid #00667f;
	border-bottom:0;
}
h1{
	flex:1;
	margin-left:114px;
	text-align:center;
	font-weight:normal;
	font-size:19px;
	line-height:24px;
}
.config{
	display:flex;
	align-items:center;
	justify-content:flex-end;
	height:44px;
	padding-right:23px;
}
.config select{
	width:107px;
	height:22px;
	margin-right:24px;
	padding:0 8px 0 4px;
	border:1px solid #9cc0c6;
	border-radius:4px;
	appearance:none;
	background:#fff url("data:image/svg+xml,%3Csvg xmlns='http://www.w3.org/2000/svg' width='8' height='6'%3E%3Cpath d='M0 0h8L4 6z' fill='%230d6472'/%3E%3C/svg%3E") right 6px center no-repeat;
	font:inherit;
}
.run{margin-right:11px;}
.cs{margin-right:12px;color:#2a7a8c;}
.vb{margin-right:6px;text-decoration:underline;}
.toggle{
	display:flex;
	align-items:center;
	justify-content:flex-end;
	gap:7px;
	height:20px;
	margin-bottom:11px;
	padding-right:30px;
}
.toggle label{display:flex;align-items:center;gap:4px;}
.toggle input{
	appearance:none;
	width:12px;
	height:12px;
	margin:0;
	border:1px solid #8b9299;
	border-radius:50%;
	background:#e6e8ea;
}
.toggle input:checked{background:radial-gradient(circle,#6cc4f0 1px,#123a5c 3px,#123a5c 4px,#e6e8ea 4px);}

.grid{
	position:relative;
	margin:0 30px 0 148px;
	border:1px solid #9ab6c6;
	color:#333;
}
table{
	width:100%;
	table-layout:fixed;
	border-collapse:separate;
	border-spacing:0;
}
.w95{width:95px;}
.w99{width:99px;}
.w94{width:94px;}
.w160{width:160px;}
.w159{width:159px;}
.w59{width:59px;}
th,td{
	padding:4px 9px 4px 0;
	text-align:right;
	white-space:nowrap;
	font-weight:normal;
}
th{
	height:26px;
	padding:1px 8px 0 0;
	border-right:1px solid #7fb2cd;
	border-bottom:1px solid #3f7fae;
	background:linear-gradient(#e2f4fd,#c9eafa 40%,#b3e1f8 45%,#a0d8f5);
}
td{border-right:1px solid #e4e7ec;}
th:last-child,td:last-child{border-right:0;}
th:nth-child(6),tbody td:nth-child(6),.filter td:nth-child(6){border-right-color:#111;}
.filter td{
	height:35px;
	padding:0 8px 0 0;
	background:#ebeef7;
	border-right-color:#fff;
}
.filter div{display:flex;align-items:center;justify-content:flex-end;}
.filter input{
	width:54px;
	height:22px;
	padding:0 2px;
	border:1px solid #d5d9e0;
	border-top-color:#a6abb3;
	border-radius:0;
	font-size:14px;
	text-align:right;
}
.filter .date{margin-right:4px;}
.filter .date input{width:94px;}
.filter .name input{width:109px;}
.filter .id input{width:44px;}
.filter button{
	display:flex;
	align-items:center;
	justify-content:center;
	width:22px;
	height:22px;
}
.filter button svg{width:11px;height:11px;}
.filter .on{
	border:2px solid #2c5f80;
	border-radius:3px;
	background:linear-gradient(#d3ecf9,#7fbfe2);
}
.filter .cal{width:16px;margin-left:6px;}
.filter .cal svg{width:16px;height:16px;}
tfoot td{
	padding:4px 9px 3px 0;
	border:0;
	border-bottom:1px solid #fff;
	background:#dfe4f4;
	font-size:12px;
	font-weight:bold;
}

.pager{
	display:flex;
	align-items:center;
	height:35px;
	padding:0 6px 0 10px;
	border-top:1px solid #9ab6c6;
	background:#eff6fd;
}
.info{flex:1;color:#888;}
.info b{color:#444;font-weight:normal;}
.size{display:flex;align-items:center;gap:4px;margin-right:20px;}
.size button{
	display:flex;
	align-items:center;
	justify-content:space-between;
	width:46px;
	height:22px;
	padding:0 4px 0 5px;
	border:1px solid #555;
	border-radius:3px;
	background:#fff;
}
.nav + .nav{margin-left:16px;}
.pages{display:flex;align-items:center;margin:0 19px 0 54px;color:#000;}
.pages a{width:16px;line-height:20px;text-align:center;}
.pages a:first-child,.pages a:nth-child(2){width:20px;}
.pages .cur{border:1px solid #2e78b8;border-radius:3px;}

/* filter menu, opens over the grid */
.menu{
	position:absolute;
	left:-90px;
	top:46px;
	width:209px;
	padding:1px 1px 0;
	border:1px solid #888;
	background:linear-gradient(90deg,#f0f0f0 178px,#dcdcdc 178px,#dcdcdc 179px,#fff 179px,#fff 180px,#f0f0f0 180px);
	box-shadow:2px 2px 3px rgba(0,0,0,.12);
	color:#000;
}
.menu li{
	height:23px;
	padding-right:30px;
	line-height:22px;
	border:1px solid transparent;
	text-align:right;
}
.menu .hover{
	border-color:#a9cfe2;
	border-radius:3px;
	background:linear-gradient(#e8f1f6,#d8e9f1);
}

.post{
	display:flex;
	align-items:center;
	justify-content:flex-end;
	gap:23px;
	margin:14px 50px 0 0;
}
.post button{
	width:66px;
	height:20px;
	border:1px solid #4f6579;
	background:linear-gradient(#dfe6ee,#c2cedb 45%,#a9bbcc 50%,#c3d2e0);
}
h2{
	margin:20px 30px 10px 0;
	color:#2a94a2;
	font-size:13px;
	line-height:20px;
	font-weight:normal;
	text-align:right;
}
.source{
	margin:0 30px;
	padding:6px 7px 0 6px;
	background:#b5e2e6;
	color:#000;
}
.source-bar{
	display:flex;
	align-items:flex-start;
	justify-content:space-between;
	padding:0 12px 0 114px;
}
.files{display:flex;background:#d2edf0;}
.files a{
	display:flex;
	align-items:center;
	gap:5px;
	height:31px;
	padding:0 11px;
}
.files .drop{gap:12px;}
.tri{color:#2aa5b4;}
.files .sel{
	height:32px;
	margin-bottom:-1px;
	border:1px solid #92cdd6;
	border-bottom:0;
	background:#fff;
}
.open{
	display:flex;
	align-items:center;
	gap:8px;
	padding-top:5px;
	color:#0c3a48;
}
.ball{
	display:flex;
	align-items:center;
	justify-content:center;
	width:17px;
	height:17px;
	border-radius:50%;
	box-shadow:0 1px 2px rgba(0,0,0,.3);
	color:#fff;
	font:bold 7px/17px "Noto Sans",sans-serif;
}
.vbi{background:radial-gradient(circle at 50% 20%,#8ab0f5,#2450c8 60%,#12309a);}
.csi{background:radial-gradient(circle at 50% 20%,#9add8a,#1c8a22 60%,#0b6412);}
.lsi{background:radial-gradient(circle at 50% 20%,#83cdd6,#1c7485 60%,#0a4c5b);}
.ini{
	background:radial-gradient(circle at 50% 20%,#ffdca0,#f28d1a 60%,#d26c05);
	color:#6b3200;
	font-size:11px;
}
.source-body{height:200px;border:1px solid #92cdd6;background:#fff;}

/* examples tree */
.side{
	position:relative;
	z-index:0;
	width:220px;
}
.side:before{
	content:"";
	position:absolute;
	z-index:-1;
	left:0;
	top:0;
	right:0;
	height:495px;
	border-bottom:1px solid #04495a;
	border-radius:0 0 6px 0;
	background:linear-gradient(rgba(0,48,66,0) 220px,#01303f 460px);
}
.side-head{
	display:flex;
	align-items:center;
	justify-content:flex-end;
	height:24px;
	margin-left:66px;
	padding-right:7px;
	border-bottom:1px solid #146d7e;
	font-size:13px;
}
.tree{margin-top:3px;}
.tree li{
	display:flex;
	align-items:center;
	justify-content:flex-end;
	height:18px;
	padding-right:1px;
}
.sub:before{
	content:"";
	margin:0 auto 0 55px;
	border:4px solid transparent;
	border-left:4px solid #1b8292;
	border-right:0;
}
.opened:before{
	margin-left:53px;
	border:4px solid transparent;
	border-top-color:#d9f2f5;
	border-bottom:0;
}
.here{color:#6ff0da;}
.here svg{margin:0 auto 0 68px;}
.controls{margin:38px 0 0 36px;}
.controls li{
	display:flex;
	align-items:center;
	justify-content:space-between;
	height:26px;
	padding:0 1px 0 9px;
	border-bottom:1px solid #123842;
}
.controls svg{width:15px;height:15px;}

/* status bar */
.status{
	display:flex;
	flex:none;
	justify-content:flex-end;
	height:25px;
	border-top:1px solid #8b8b8b;
	border-bottom:1px solid #111;
	background:#f0eceb;
	box-shadow:0 -2px 0 #fff;
	position:relative;
}
.status > *{
	display:flex;
	align-items:center;
	border-left:1px solid #d3cfce;
}
.status i{width:24px;}
.zone{width:270px;padding-left:4px;gap:4px;}
.lock{width:45px;padding-left:8px;gap:10px;}
.zoom{width:80px;padding-left:11px;gap:3px;}
.zoom span{flex:1;}
```
